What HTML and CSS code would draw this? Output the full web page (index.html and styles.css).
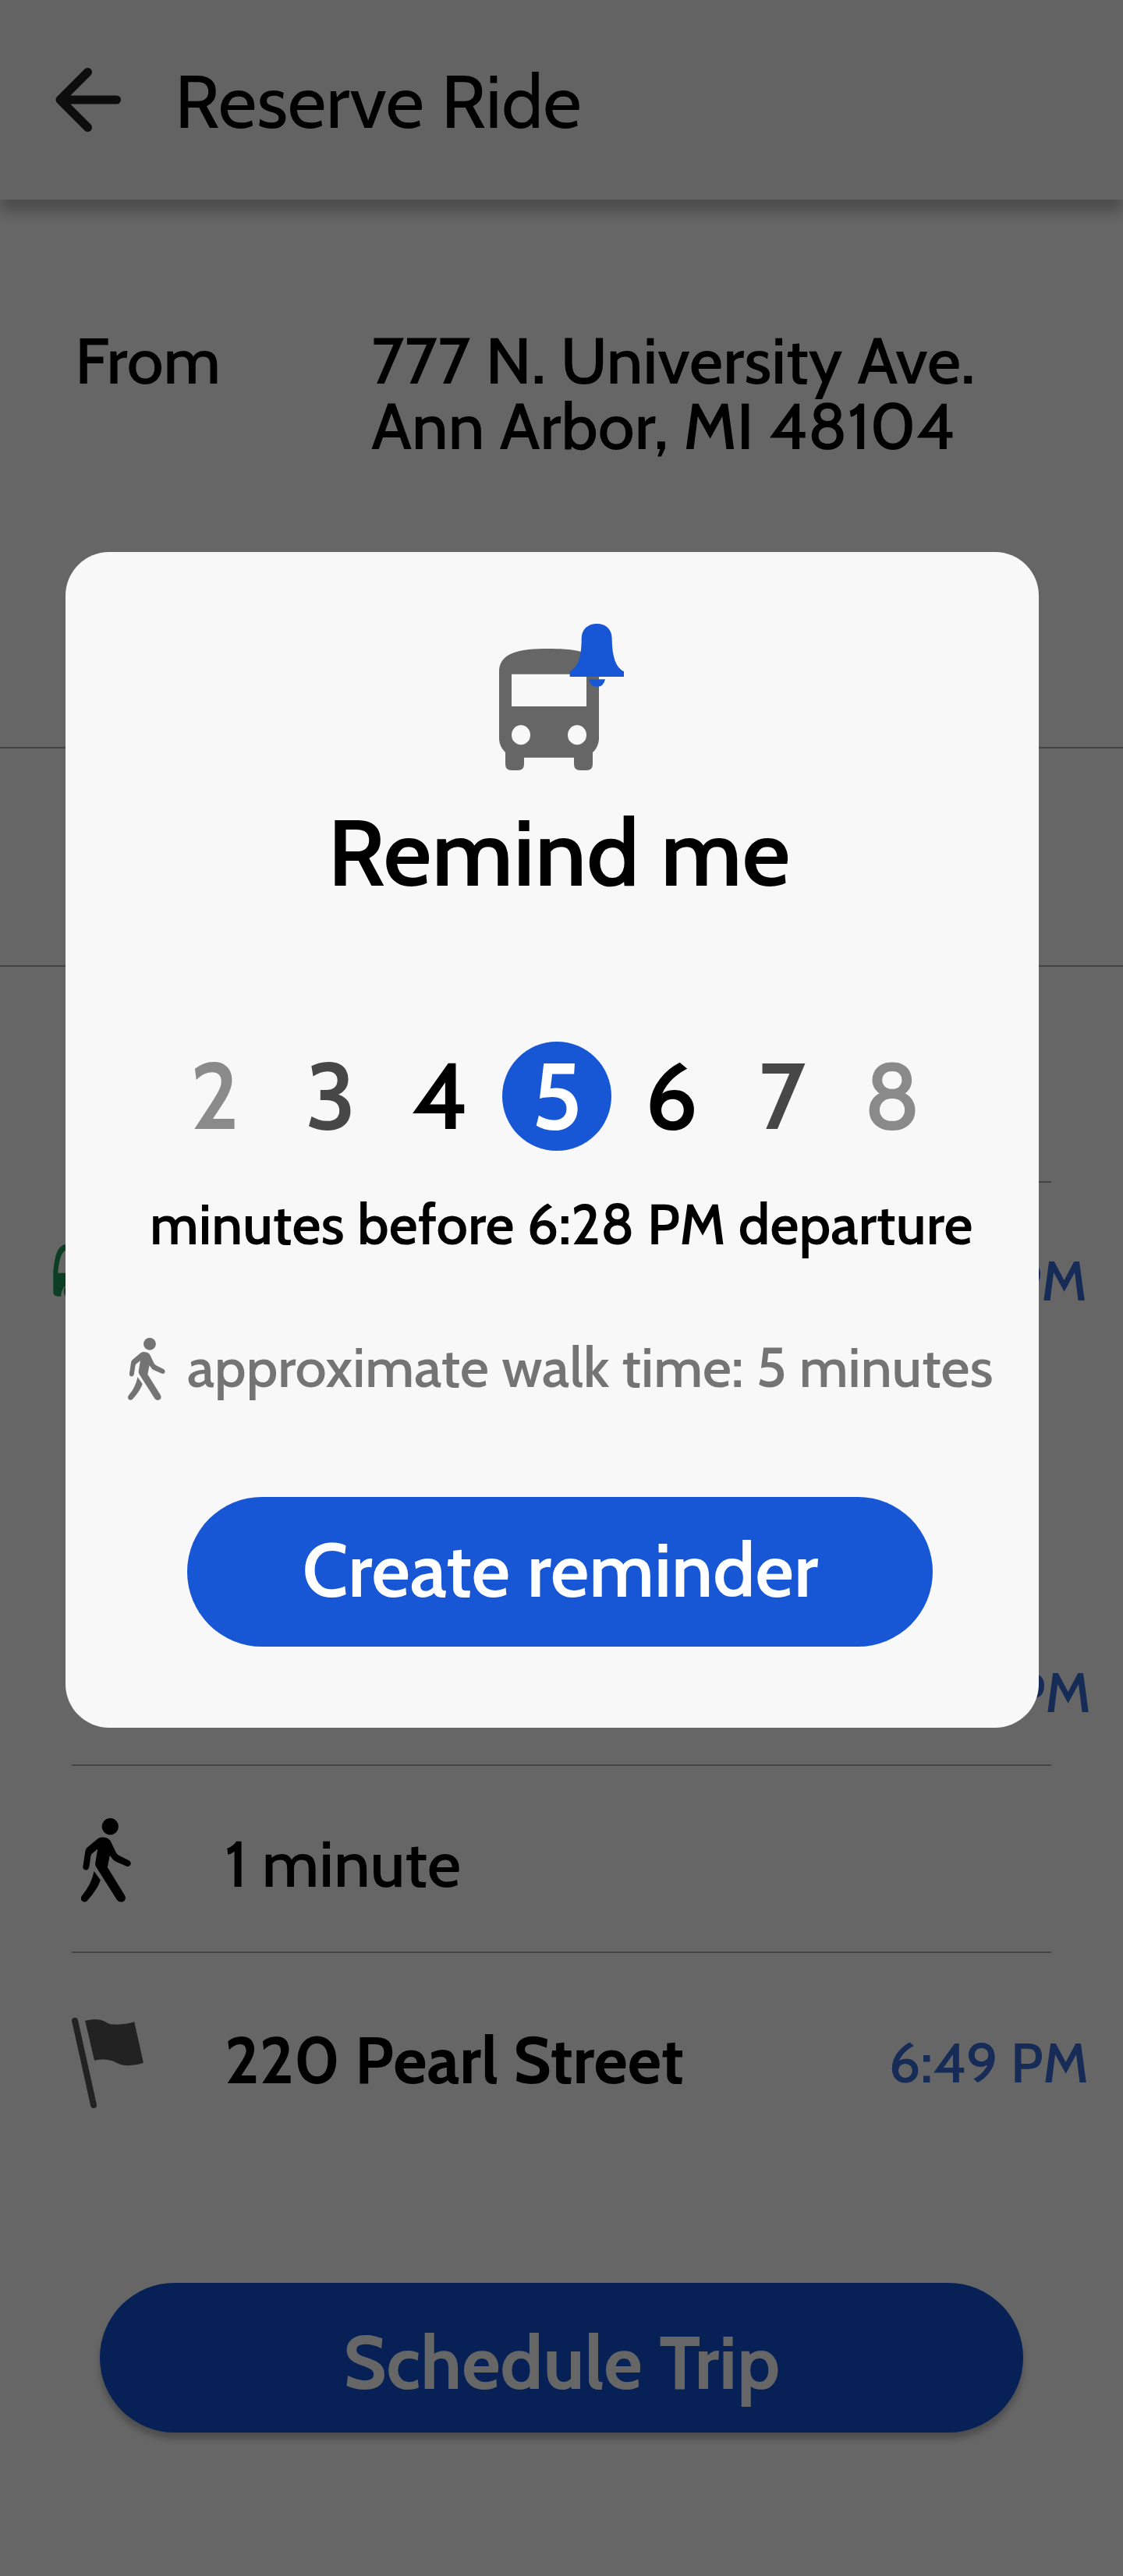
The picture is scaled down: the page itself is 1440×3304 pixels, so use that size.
FILE: index.html
```
<!DOCTYPE html>
<html lang="en">
<head>
<meta charset="utf-8">
<title>Reserve Ride</title>
<link rel="stylesheet" href="styles.css">
</head>
<body>
<svg class="sprite" aria-hidden="true">
  <symbol id="walker" viewBox="72 96 193 324">
    <circle cx="184.5" cy="127.5" r="32"/>
    <path d="M150 169C165 168 178 172 185 182L207 228Q210 235 218 239L256 258Q266 263 264 273Q260 285 248 281L208 264Q196 259 191 250L183 239L174 285L240 392Q247 405 240 414Q226 426 211 412L130 284Q126 277 127 268L136 214L114 232Q111 235 110 239L103 285Q100 296 90 296Q79 294 79 283L88 223Q89 215 95 209L135 176Q142 170 150 169Z"/>
    <path d="M122 300L147 335Q135 372 94 416Q84 423 75 415Q68 406 75 395Q112 352 122 300Z"/>
  </symbol>
</svg>
<div class="screen">
  <header class="topbar">
    <svg class="back" viewBox="0 0 86 84">
      <path d="M42.500 6.500L7 42L42.500 77.500M7 42H79.500" fill="none" stroke="#212121" stroke-width="11" stroke-linecap="round" stroke-linejoin="round"/>
    </svg>
    <h1 class="title">Reserve Ride</h1>
  </header>

  <section class="origin">
    <div class="label">From</div>
    <div class="address">777 N. University Ave.<br>Ann Arbor, MI 48104</div>
  </section>
  <section class="options"></section>
  <div class="spacer"></div>

  <section class="legs">
    <div class="leg ride">
      <div class="stop board">
        <svg class="bus" viewBox="84 107 312 214" fill="#1c9b55">
          <path fill-rule="evenodd" d="M84 290V215C90 165 94 107 138 107H396V308H200C195 240 118 240 114 308H102Q84 306 84 290ZM102 218H380V126H150C118 126 108 155 102 218Z"/>
          <circle cx="158" cy="288" r="33"/>
        </svg>
        <span class="time">6:28 PM</span>
      </div>
      <div class="stop alight"><span class="time">6:48 PM</span></div>
    </div>
    <div class="leg walk">
      <div class="icon"><svg class="walk-icon" fill="#000"><use href="#walker"/></svg></div>
      <div class="duration">1 minute</div>
    </div>
    <div class="leg arrive">
      <div class="icon flag-cell">
        <svg class="flag" viewBox="36 863 276 349">
          <path d="M48 875L120 1200" stroke="#555" stroke-width="24" stroke-linecap="round"/>
          <path fill="#555" d="M87 874Q135 862 165 878C178 886 180 889 210 889Q245 889 277 879L312 1037Q285 1047 255 1047C235 1047 220 1043 205 1035Q170 1018 123 1028Z"/>
        </svg>
      </div>
      <div class="place">220 Pearl Street</div>
      <span class="time">6:49 PM</span>
    </div>
  </section>
  <button class="schedule">Schedule Trip</button>
</div>

<div class="scrim"></div>

<div class="modal">
  <svg class="modal-icon" viewBox="120 60 480 564">
    <path fill="#666" fill-rule="evenodd" d="M120 245C120 170 200 156 312 156C424 156 504 170 504 245V505Q502 535 480 555V600Q480 624 456 624H432Q408 624 408 600V575H216V600Q216 624 192 624H168Q144 624 144 600V555Q122 535 120 505ZM168 254V378H456V254ZM168 488A36 38 0 1 0 240 488A36 38 0 1 0 168 488ZM384 488A36 38 0 1 0 456 488A36 38 0 1 0 384 488Z"/>
    <path fill="#1757d6" d="M392 264V244C430 225 437 170 437 118C437 80 463 60 496 60C530 60 554 80 554 118C555 170 562 225 600 244V264ZM464 274H528Q522 303 496 303Q470 303 464 274Z"/>
  </svg>
  <h2 class="modal-title">Remind me</h2>
  <div class="picker">
    <span class="num far">2</span>
    <span class="num near gap-9">3</span>
    <span class="num">4</span>
    <span class="num selected gap-10">5</span>
    <span class="num gap-7">6</span>
    <span class="num near gap-2">7</span>
    <span class="num far gap-1">8</span>
  </div>
  <p class="caption">minutes before 6:28 PM departure</p>
  <div class="hint">
    <svg class="hint-icon" fill="#747474"><use href="#walker"/></svg>
    <span class="hint-text">approximate walk time: 5 minutes</span>
  </div>
  <button class="create">Create reminder</button>
</div>
</body>
</html>
```
FILE: styles.css
```
* { box-sizing: border-box; }
body {
  margin: 0;
  background: #fff;
  font-family: Cabin, Lato, sans-serif;
  font-weight: 500;
  color: #000;
  position: relative;
}
h1, h2, p { margin: 0; }
button { border: 0; font-family: inherit; display: block; }
.sprite { display: none; }

.screen {
  width: 1440px;
  height: 3304px;
  display: flex;
  flex-direction: column;
  align-items: stretch;
  overflow: hidden;
}
.topbar {
  height: 256px;
  flex: none;
  display: flex;
  align-items: center;
  padding-left: 70px;
  background: #f8f8f8;
  box-shadow: 0 16px 16px rgba(0, 0, 0, .25);
}
.back { width: 86px; height: 84px; }
.title {
  margin: 3px 0 0 68px;
  font-size: 96px;
  line-height: 120px;
  font-weight: 400;
}
.origin {
  height: 702px;
  flex: none;
  padding: 164px 0 0 96px;
  display: flex;
  font-size: 84px;
  line-height: 84px;
}
.label { width: 380px; }
.options {
  height: 282px;
  flex: none;
  border-top: 2px solid #aaa;
  border-bottom: 2px solid #aaa;
}
.spacer { height: 275px; flex: none; }

.legs {
  flex: none;
  height: 1270px;
}
.leg {
  display: flex;
  flex-wrap: wrap;
  align-items: center;
  align-content: flex-start;
}
.leg::before {
  content: "";
  width: 1256px;
  height: 2px;
  margin: 0 92px;
  background: #aaa;
}
.ride { height: 748px; }
.walk { height: 240px; }
.arrive { height: 282px; }
.stop {
  width: 100%;
  display: flex;
  align-items: center;
  justify-content: flex-end;
}
.board {
  height: 252px;
  padding-right: 46px;
  padding-left: 68px;
  justify-content: space-between;
}
.alight { height: 186px; padding-right: 41px; margin-top: 309px; }
.bus { width: 104px; height: 71px; margin-top: -24px; }
.time {
  font-size: 72px;
  line-height: 88px;
  color: #3a6cda;
}
.icon {
  width: 288px;
  height: 238px;
  padding: 4px 0 0 104px;
  display: flex;
  align-items: center;
}
.flag-cell { height: 280px; padding: 2px 0 0 92px; }
.walk-icon { width: 64px; height: 108px; }
.flag { width: 92px; height: 116px; }
.duration, .place { font-size: 84px; line-height: 100px; }
.duration { margin-top: 12px; }
.place { font-weight: 700; margin-top: -6px; }
.arrive .time { margin: 2px 44px 0 auto; }

.schedule {
  width: 1184px;
  height: 192px;
  flex: none;
  margin: 143px 0 0 128px;
  padding: 11px 0 0;
  border-radius: 96px;
  background: #1254d6;
  color: #fff;
  font-size: 96px;
  line-height: 120px;
  font-weight: 700;
  box-shadow: 0 8px 8px rgba(0, 0, 0, .25);
}

.scrim {
  position: absolute;
  inset: 0;
  background: rgba(0, 0, 0, .6);
}
.modal {
  position: absolute;
  left: 84px;
  top: 708px;
  width: 1248px;
  height: 1508px;
  border-radius: 56px;
  background: #f8f8f8;
  display: flex;
  flex-direction: column;
  align-items: flex-start;
}
.modal-icon { width: 160px; height: 188px; margin: 92px 0 0 556px; flex: none; }
.modal-title {
  margin: 45px 0 0 336px;
  font-size: 120px;
  line-height: 120px;
  font-weight: 600;
  white-space: nowrap;
}
.picker {
  display: flex;
  margin: 183px 0 0 121px;
}
.num {
  width: 140px;
  height: 140px;
  padding-bottom: 2px;
  text-align: center;
  font-size: 120px;
  line-height: 138px;
  font-weight: 600;
  border-radius: 50%;
}
.far { color: #8a8a8a; }
.near { color: #474747; }
.selected { background: #1757d6; color: #fff; }
.gap-1 { margin-left: 1px; }
.gap-2 { margin-left: 2px; }
.gap-7 { margin-left: 7px; }
.gap-9 { margin-left: 9px; }
.gap-10 { margin-left: 10px; }
.caption {
  margin: 55px 0 0 108px;
  font-size: 72px;
  line-height: 80px;
  font-weight: 600;
  white-space: nowrap;
}
.hint {
  display: flex;
  align-items: flex-start;
  gap: 28px;
  margin: 105px 0 0 80px;
  height: 80px;
  color: #747474;
}
.hint-icon { width: 48px; height: 80px; }
.hint-text {
  margin-top: -2px;
  font-size: 72px;
  line-height: 80px;
  white-space: nowrap;
}
.create {
  width: 956px;
  height: 192px;
  margin: 124px 0 0 156px;
  padding: 0 0 4px 1px;
  border-radius: 96px;
  background: #1757d6;
  color: #fff;
  font-size: 96px;
  line-height: 120px;
  font-weight: 600;
}
```
